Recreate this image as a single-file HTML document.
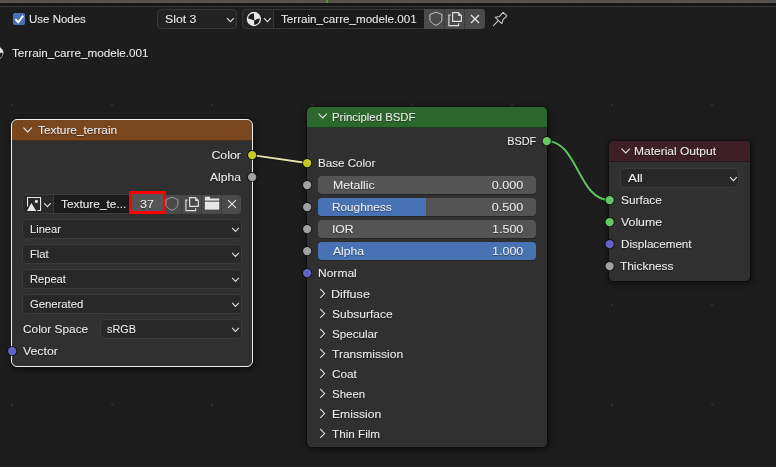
<!DOCTYPE html>
<html><head><meta charset="utf-8">
<style>
*{box-sizing:border-box;margin:0;padding:0}
html,body{width:776px;height:467px;overflow:hidden;background:#1d1d1d}
body{position:relative;font-family:"Liberation Sans",sans-serif;font-size:11.3px;color:#ececec}
.a{position:absolute}
.t{position:absolute;line-height:14px;height:14px;white-space:nowrap;transform-origin:left center;-webkit-text-stroke:0.08px #ececec;text-shadow:0 0.5px 1px rgba(0,0,0,0.45)}
.r{text-align:right}
.node{position:absolute;background:#303030;border-radius:4.5px;box-shadow:0 0 1px 1px rgba(0,0,0,0.3),1px 2px 6px 2px rgba(0,0,0,0.42)}
.hdr{position:absolute;left:0;right:0;top:0;height:21px;border-radius:5px 5px 0 0}
.sock{position:absolute;width:8.2px;height:8.2px;border-radius:50%;box-shadow:0 0 0 0.9px rgba(12,12,12,0.75);transform:translate(0.6px,0.6px)}
.dd{position:absolute;background:#282828;border:1px solid #3b3b3b;border-radius:4px;height:19px}
.sl{position:absolute;background:#545454;border-radius:4px;height:18px;overflow:hidden;box-shadow:0 1px 0.5px rgba(0,0,0,0.22)}
</style></head><body>
<!--BODY-->
<!-- grid dots -->
<svg class="a" style="left:0;top:0" width="776" height="467"><g fill="#282828"><circle cx="12.0" cy="44.8" r="0.8"/><circle cx="32.0" cy="44.8" r="0.8"/><circle cx="52.0" cy="44.8" r="0.8"/><circle cx="72.0" cy="44.8" r="0.8"/><circle cx="92.0" cy="44.8" r="0.8"/><circle cx="112.0" cy="44.8" r="0.8"/><circle cx="132.0" cy="44.8" r="0.8"/><circle cx="152.0" cy="44.8" r="0.8"/><circle cx="172.0" cy="44.8" r="0.8"/><circle cx="192.0" cy="44.8" r="0.8"/><circle cx="212.0" cy="44.8" r="0.8"/><circle cx="232.0" cy="44.8" r="0.8"/><circle cx="252.0" cy="44.8" r="0.8"/><circle cx="272.0" cy="44.8" r="0.8"/><circle cx="292.0" cy="44.8" r="0.8"/><circle cx="312.0" cy="44.8" r="0.8"/><circle cx="332.0" cy="44.8" r="0.8"/><circle cx="352.0" cy="44.8" r="0.8"/><circle cx="372.0" cy="44.8" r="0.8"/><circle cx="392.0" cy="44.8" r="0.8"/><circle cx="412.0" cy="44.8" r="0.8"/><circle cx="432.0" cy="44.8" r="0.8"/><circle cx="452.0" cy="44.8" r="0.8"/><circle cx="472.0" cy="44.8" r="0.8"/><circle cx="492.0" cy="44.8" r="0.8"/><circle cx="512.0" cy="44.8" r="0.8"/><circle cx="532.0" cy="44.8" r="0.8"/><circle cx="552.0" cy="44.8" r="0.8"/><circle cx="572.0" cy="44.8" r="0.8"/><circle cx="592.0" cy="44.8" r="0.8"/><circle cx="612.0" cy="44.8" r="0.8"/><circle cx="632.0" cy="44.8" r="0.8"/><circle cx="652.0" cy="44.8" r="0.8"/><circle cx="672.0" cy="44.8" r="0.8"/><circle cx="692.0" cy="44.8" r="0.8"/><circle cx="712.0" cy="44.8" r="0.8"/><circle cx="732.0" cy="44.8" r="0.8"/><circle cx="752.0" cy="44.8" r="0.8"/><circle cx="772.0" cy="44.8" r="0.8"/><circle cx="12.0" cy="64.8" r="0.8"/><circle cx="32.0" cy="64.8" r="0.8"/><circle cx="52.0" cy="64.8" r="0.8"/><circle cx="72.0" cy="64.8" r="0.8"/><circle cx="92.0" cy="64.8" r="0.8"/><circle cx="112.0" cy="64.8" r="0.8"/><circle cx="132.0" cy="64.8" r="0.8"/><circle cx="152.0" cy="64.8" r="0.8"/><circle cx="172.0" cy="64.8" r="0.8"/><circle cx="192.0" cy="64.8" r="0.8"/><circle cx="212.0" cy="64.8" r="0.8"/><circle cx="232.0" cy="64.8" r="0.8"/><circle cx="252.0" cy="64.8" r="0.8"/><circle cx="272.0" cy="64.8" r="0.8"/><circle cx="292.0" cy="64.8" r="0.8"/><circle cx="312.0" cy="64.8" r="0.8"/><circle cx="332.0" cy="64.8" r="0.8"/><circle cx="352.0" cy="64.8" r="0.8"/><circle cx="372.0" cy="64.8" r="0.8"/><circle cx="392.0" cy="64.8" r="0.8"/><circle cx="412.0" cy="64.8" r="0.8"/><circle cx="432.0" cy="64.8" r="0.8"/><circle cx="452.0" cy="64.8" r="0.8"/><circle cx="472.0" cy="64.8" r="0.8"/><circle cx="492.0" cy="64.8" r="0.8"/><circle cx="512.0" cy="64.8" r="0.8"/><circle cx="532.0" cy="64.8" r="0.8"/><circle cx="552.0" cy="64.8" r="0.8"/><circle cx="572.0" cy="64.8" r="0.8"/><circle cx="592.0" cy="64.8" r="0.8"/><circle cx="612.0" cy="64.8" r="0.8"/><circle cx="632.0" cy="64.8" r="0.8"/><circle cx="652.0" cy="64.8" r="0.8"/><circle cx="672.0" cy="64.8" r="0.8"/><circle cx="692.0" cy="64.8" r="0.8"/><circle cx="712.0" cy="64.8" r="0.8"/><circle cx="732.0" cy="64.8" r="0.8"/><circle cx="752.0" cy="64.8" r="0.8"/><circle cx="772.0" cy="64.8" r="0.8"/><circle cx="12.0" cy="84.8" r="0.8"/><circle cx="32.0" cy="84.8" r="0.8"/><circle cx="52.0" cy="84.8" r="0.8"/><circle cx="72.0" cy="84.8" r="0.8"/><circle cx="92.0" cy="84.8" r="0.8"/><circle cx="112.0" cy="84.8" r="0.8"/><circle cx="132.0" cy="84.8" r="0.8"/><circle cx="152.0" cy="84.8" r="0.8"/><circle cx="172.0" cy="84.8" r="0.8"/><circle cx="192.0" cy="84.8" r="0.8"/><circle cx="212.0" cy="84.8" r="0.8"/><circle cx="232.0" cy="84.8" r="0.8"/><circle cx="252.0" cy="84.8" r="0.8"/><circle cx="272.0" cy="84.8" r="0.8"/><circle cx="292.0" cy="84.8" r="0.8"/><circle cx="312.0" cy="84.8" r="0.8"/><circle cx="332.0" cy="84.8" r="0.8"/><circle cx="352.0" cy="84.8" r="0.8"/><circle cx="372.0" cy="84.8" r="0.8"/><circle cx="392.0" cy="84.8" r="0.8"/><circle cx="412.0" cy="84.8" r="0.8"/><circle cx="432.0" cy="84.8" r="0.8"/><circle cx="452.0" cy="84.8" r="0.8"/><circle cx="472.0" cy="84.8" r="0.8"/><circle cx="492.0" cy="84.8" r="0.8"/><circle cx="512.0" cy="84.8" r="0.8"/><circle cx="532.0" cy="84.8" r="0.8"/><circle cx="552.0" cy="84.8" r="0.8"/><circle cx="572.0" cy="84.8" r="0.8"/><circle cx="592.0" cy="84.8" r="0.8"/><circle cx="612.0" cy="84.8" r="0.8"/><circle cx="632.0" cy="84.8" r="0.8"/><circle cx="652.0" cy="84.8" r="0.8"/><circle cx="672.0" cy="84.8" r="0.8"/><circle cx="692.0" cy="84.8" r="0.8"/><circle cx="712.0" cy="84.8" r="0.8"/><circle cx="732.0" cy="84.8" r="0.8"/><circle cx="752.0" cy="84.8" r="0.8"/><circle cx="772.0" cy="84.8" r="0.8"/><circle cx="32.0" cy="104.8" r="0.8"/><circle cx="52.0" cy="104.8" r="0.8"/><circle cx="72.0" cy="104.8" r="0.8"/><circle cx="92.0" cy="104.8" r="0.8"/><circle cx="132.0" cy="104.8" r="0.8"/><circle cx="152.0" cy="104.8" r="0.8"/><circle cx="172.0" cy="104.8" r="0.8"/><circle cx="192.0" cy="104.8" r="0.8"/><circle cx="232.0" cy="104.8" r="0.8"/><circle cx="252.0" cy="104.8" r="0.8"/><circle cx="272.0" cy="104.8" r="0.8"/><circle cx="292.0" cy="104.8" r="0.8"/><circle cx="332.0" cy="104.8" r="0.8"/><circle cx="352.0" cy="104.8" r="0.8"/><circle cx="372.0" cy="104.8" r="0.8"/><circle cx="392.0" cy="104.8" r="0.8"/><circle cx="432.0" cy="104.8" r="0.8"/><circle cx="452.0" cy="104.8" r="0.8"/><circle cx="472.0" cy="104.8" r="0.8"/><circle cx="492.0" cy="104.8" r="0.8"/><circle cx="532.0" cy="104.8" r="0.8"/><circle cx="552.0" cy="104.8" r="0.8"/><circle cx="572.0" cy="104.8" r="0.8"/><circle cx="592.0" cy="104.8" r="0.8"/><circle cx="632.0" cy="104.8" r="0.8"/><circle cx="652.0" cy="104.8" r="0.8"/><circle cx="672.0" cy="104.8" r="0.8"/><circle cx="692.0" cy="104.8" r="0.8"/><circle cx="732.0" cy="104.8" r="0.8"/><circle cx="752.0" cy="104.8" r="0.8"/><circle cx="772.0" cy="104.8" r="0.8"/><circle cx="12.0" cy="124.8" r="0.8"/><circle cx="32.0" cy="124.8" r="0.8"/><circle cx="52.0" cy="124.8" r="0.8"/><circle cx="72.0" cy="124.8" r="0.8"/><circle cx="92.0" cy="124.8" r="0.8"/><circle cx="112.0" cy="124.8" r="0.8"/><circle cx="132.0" cy="124.8" r="0.8"/><circle cx="152.0" cy="124.8" r="0.8"/><circle cx="172.0" cy="124.8" r="0.8"/><circle cx="192.0" cy="124.8" r="0.8"/><circle cx="212.0" cy="124.8" r="0.8"/><circle cx="232.0" cy="124.8" r="0.8"/><circle cx="252.0" cy="124.8" r="0.8"/><circle cx="272.0" cy="124.8" r="0.8"/><circle cx="292.0" cy="124.8" r="0.8"/><circle cx="312.0" cy="124.8" r="0.8"/><circle cx="332.0" cy="124.8" r="0.8"/><circle cx="352.0" cy="124.8" r="0.8"/><circle cx="372.0" cy="124.8" r="0.8"/><circle cx="392.0" cy="124.8" r="0.8"/><circle cx="412.0" cy="124.8" r="0.8"/><circle cx="432.0" cy="124.8" r="0.8"/><circle cx="452.0" cy="124.8" r="0.8"/><circle cx="472.0" cy="124.8" r="0.8"/><circle cx="492.0" cy="124.8" r="0.8"/><circle cx="512.0" cy="124.8" r="0.8"/><circle cx="532.0" cy="124.8" r="0.8"/><circle cx="552.0" cy="124.8" r="0.8"/><circle cx="572.0" cy="124.8" r="0.8"/><circle cx="592.0" cy="124.8" r="0.8"/><circle cx="612.0" cy="124.8" r="0.8"/><circle cx="632.0" cy="124.8" r="0.8"/><circle cx="652.0" cy="124.8" r="0.8"/><circle cx="672.0" cy="124.8" r="0.8"/><circle cx="692.0" cy="124.8" r="0.8"/><circle cx="712.0" cy="124.8" r="0.8"/><circle cx="732.0" cy="124.8" r="0.8"/><circle cx="752.0" cy="124.8" r="0.8"/><circle cx="772.0" cy="124.8" r="0.8"/><circle cx="12.0" cy="144.8" r="0.8"/><circle cx="32.0" cy="144.8" r="0.8"/><circle cx="52.0" cy="144.8" r="0.8"/><circle cx="72.0" cy="144.8" r="0.8"/><circle cx="92.0" cy="144.8" r="0.8"/><circle cx="112.0" cy="144.8" r="0.8"/><circle cx="132.0" cy="144.8" r="0.8"/><circle cx="152.0" cy="144.8" r="0.8"/><circle cx="172.0" cy="144.8" r="0.8"/><circle cx="192.0" cy="144.8" r="0.8"/><circle cx="212.0" cy="144.8" r="0.8"/><circle cx="232.0" cy="144.8" r="0.8"/><circle cx="252.0" cy="144.8" r="0.8"/><circle cx="272.0" cy="144.8" r="0.8"/><circle cx="292.0" cy="144.8" r="0.8"/><circle cx="312.0" cy="144.8" r="0.8"/><circle cx="332.0" cy="144.8" r="0.8"/><circle cx="352.0" cy="144.8" r="0.8"/><circle cx="372.0" cy="144.8" r="0.8"/><circle cx="392.0" cy="144.8" r="0.8"/><circle cx="412.0" cy="144.8" r="0.8"/><circle cx="432.0" cy="144.8" r="0.8"/><circle cx="452.0" cy="144.8" r="0.8"/><circle cx="472.0" cy="144.8" r="0.8"/><circle cx="492.0" cy="144.8" r="0.8"/><circle cx="512.0" cy="144.8" r="0.8"/><circle cx="532.0" cy="144.8" r="0.8"/><circle cx="552.0" cy="144.8" r="0.8"/><circle cx="572.0" cy="144.8" r="0.8"/><circle cx="592.0" cy="144.8" r="0.8"/><circle cx="612.0" cy="144.8" r="0.8"/><circle cx="632.0" cy="144.8" r="0.8"/><circle cx="652.0" cy="144.8" r="0.8"/><circle cx="672.0" cy="144.8" r="0.8"/><circle cx="692.0" cy="144.8" r="0.8"/><circle cx="712.0" cy="144.8" r="0.8"/><circle cx="732.0" cy="144.8" r="0.8"/><circle cx="752.0" cy="144.8" r="0.8"/><circle cx="772.0" cy="144.8" r="0.8"/><circle cx="12.0" cy="164.8" r="0.8"/><circle cx="32.0" cy="164.8" r="0.8"/><circle cx="52.0" cy="164.8" r="0.8"/><circle cx="72.0" cy="164.8" r="0.8"/><circle cx="92.0" cy="164.8" r="0.8"/><circle cx="112.0" cy="164.8" r="0.8"/><circle cx="132.0" cy="164.8" r="0.8"/><circle cx="152.0" cy="164.8" r="0.8"/><circle cx="172.0" cy="164.8" r="0.8"/><circle cx="192.0" cy="164.8" r="0.8"/><circle cx="212.0" cy="164.8" r="0.8"/><circle cx="232.0" cy="164.8" r="0.8"/><circle cx="252.0" cy="164.8" r="0.8"/><circle cx="272.0" cy="164.8" r="0.8"/><circle cx="292.0" cy="164.8" r="0.8"/><circle cx="312.0" cy="164.8" r="0.8"/><circle cx="332.0" cy="164.8" r="0.8"/><circle cx="352.0" cy="164.8" r="0.8"/><circle cx="372.0" cy="164.8" r="0.8"/><circle cx="392.0" cy="164.8" r="0.8"/><circle cx="412.0" cy="164.8" r="0.8"/><circle cx="432.0" cy="164.8" r="0.8"/><circle cx="452.0" cy="164.8" r="0.8"/><circle cx="472.0" cy="164.8" r="0.8"/><circle cx="492.0" cy="164.8" r="0.8"/><circle cx="512.0" cy="164.8" r="0.8"/><circle cx="532.0" cy="164.8" r="0.8"/><circle cx="552.0" cy="164.8" r="0.8"/><circle cx="572.0" cy="164.8" r="0.8"/><circle cx="592.0" cy="164.8" r="0.8"/><circle cx="612.0" cy="164.8" r="0.8"/><circle cx="632.0" cy="164.8" r="0.8"/><circle cx="652.0" cy="164.8" r="0.8"/><circle cx="672.0" cy="164.8" r="0.8"/><circle cx="692.0" cy="164.8" r="0.8"/><circle cx="712.0" cy="164.8" r="0.8"/><circle cx="732.0" cy="164.8" r="0.8"/><circle cx="752.0" cy="164.8" r="0.8"/><circle cx="772.0" cy="164.8" r="0.8"/><circle cx="12.0" cy="184.8" r="0.8"/><circle cx="32.0" cy="184.8" r="0.8"/><circle cx="52.0" cy="184.8" r="0.8"/><circle cx="72.0" cy="184.8" r="0.8"/><circle cx="92.0" cy="184.8" r="0.8"/><circle cx="112.0" cy="184.8" r="0.8"/><circle cx="132.0" cy="184.8" r="0.8"/><circle cx="152.0" cy="184.8" r="0.8"/><circle cx="172.0" cy="184.8" r="0.8"/><circle cx="192.0" cy="184.8" r="0.8"/><circle cx="212.0" cy="184.8" r="0.8"/><circle cx="232.0" cy="184.8" r="0.8"/><circle cx="252.0" cy="184.8" r="0.8"/><circle cx="272.0" cy="184.8" r="0.8"/><circle cx="292.0" cy="184.8" r="0.8"/><circle cx="312.0" cy="184.8" r="0.8"/><circle cx="332.0" cy="184.8" r="0.8"/><circle cx="352.0" cy="184.8" r="0.8"/><circle cx="372.0" cy="184.8" r="0.8"/><circle cx="392.0" cy="184.8" r="0.8"/><circle cx="412.0" cy="184.8" r="0.8"/><circle cx="432.0" cy="184.8" r="0.8"/><circle cx="452.0" cy="184.8" r="0.8"/><circle cx="472.0" cy="184.8" r="0.8"/><circle cx="492.0" cy="184.8" r="0.8"/><circle cx="512.0" cy="184.8" r="0.8"/><circle cx="532.0" cy="184.8" r="0.8"/><circle cx="552.0" cy="184.8" r="0.8"/><circle cx="572.0" cy="184.8" r="0.8"/><circle cx="592.0" cy="184.8" r="0.8"/><circle cx="612.0" cy="184.8" r="0.8"/><circle cx="632.0" cy="184.8" r="0.8"/><circle cx="652.0" cy="184.8" r="0.8"/><circle cx="672.0" cy="184.8" r="0.8"/><circle cx="692.0" cy="184.8" r="0.8"/><circle cx="712.0" cy="184.8" r="0.8"/><circle cx="732.0" cy="184.8" r="0.8"/><circle cx="752.0" cy="184.8" r="0.8"/><circle cx="772.0" cy="184.8" r="0.8"/><circle cx="32.0" cy="204.8" r="0.8"/><circle cx="52.0" cy="204.8" r="0.8"/><circle cx="72.0" cy="204.8" r="0.8"/><circle cx="92.0" cy="204.8" r="0.8"/><circle cx="132.0" cy="204.8" r="0.8"/><circle cx="152.0" cy="204.8" r="0.8"/><circle cx="172.0" cy="204.8" r="0.8"/><circle cx="192.0" cy="204.8" r="0.8"/><circle cx="232.0" cy="204.8" r="0.8"/><circle cx="252.0" cy="204.8" r="0.8"/><circle cx="272.0" cy="204.8" r="0.8"/><circle cx="292.0" cy="204.8" r="0.8"/><circle cx="332.0" cy="204.8" r="0.8"/><circle cx="352.0" cy="204.8" r="0.8"/><circle cx="372.0" cy="204.8" r="0.8"/><circle cx="392.0" cy="204.8" r="0.8"/><circle cx="432.0" cy="204.8" r="0.8"/><circle cx="452.0" cy="204.8" r="0.8"/><circle cx="472.0" cy="204.8" r="0.8"/><circle cx="492.0" cy="204.8" r="0.8"/><circle cx="532.0" cy="204.8" r="0.8"/><circle cx="552.0" cy="204.8" r="0.8"/><circle cx="572.0" cy="204.8" r="0.8"/><circle cx="592.0" cy="204.8" r="0.8"/><circle cx="632.0" cy="204.8" r="0.8"/><circle cx="652.0" cy="204.8" r="0.8"/><circle cx="672.0" cy="204.8" r="0.8"/><circle cx="692.0" cy="204.8" r="0.8"/><circle cx="732.0" cy="204.8" r="0.8"/><circle cx="752.0" cy="204.8" r="0.8"/><circle cx="772.0" cy="204.8" r="0.8"/><circle cx="12.0" cy="224.8" r="0.8"/><circle cx="32.0" cy="224.8" r="0.8"/><circle cx="52.0" cy="224.8" r="0.8"/><circle cx="72.0" cy="224.8" r="0.8"/><circle cx="92.0" cy="224.8" r="0.8"/><circle cx="112.0" cy="224.8" r="0.8"/><circle cx="132.0" cy="224.8" r="0.8"/><circle cx="152.0" cy="224.8" r="0.8"/><circle cx="172.0" cy="224.8" r="0.8"/><circle cx="192.0" cy="224.8" r="0.8"/><circle cx="212.0" cy="224.8" r="0.8"/><circle cx="232.0" cy="224.8" r="0.8"/><circle cx="252.0" cy="224.8" r="0.8"/><circle cx="272.0" cy="224.8" r="0.8"/><circle cx="292.0" cy="224.8" r="0.8"/><circle cx="312.0" cy="224.8" r="0.8"/><circle cx="332.0" cy="224.8" r="0.8"/><circle cx="352.0" cy="224.8" r="0.8"/><circle cx="372.0" cy="224.8" r="0.8"/><circle cx="392.0" cy="224.8" r="0.8"/><circle cx="412.0" cy="224.8" r="0.8"/><circle cx="432.0" cy="224.8" r="0.8"/><circle cx="452.0" cy="224.8" r="0.8"/><circle cx="472.0" cy="224.8" r="0.8"/><circle cx="492.0" cy="224.8" r="0.8"/><circle cx="512.0" cy="224.8" r="0.8"/><circle cx="532.0" cy="224.8" r="0.8"/><circle cx="552.0" cy="224.8" r="0.8"/><circle cx="572.0" cy="224.8" r="0.8"/><circle cx="592.0" cy="224.8" r="0.8"/><circle cx="612.0" cy="224.8" r="0.8"/><circle cx="632.0" cy="224.8" r="0.8"/><circle cx="652.0" cy="224.8" r="0.8"/><circle cx="672.0" cy="224.8" r="0.8"/><circle cx="692.0" cy="224.8" r="0.8"/><circle cx="712.0" cy="224.8" r="0.8"/><circle cx="732.0" cy="224.8" r="0.8"/><circle cx="752.0" cy="224.8" r="0.8"/><circle cx="772.0" cy="224.8" r="0.8"/><circle cx="12.0" cy="244.8" r="0.8"/><circle cx="32.0" cy="244.8" r="0.8"/><circle cx="52.0" cy="244.8" r="0.8"/><circle cx="72.0" cy="244.8" r="0.8"/><circle cx="92.0" cy="244.8" r="0.8"/><circle cx="112.0" cy="244.8" r="0.8"/><circle cx="132.0" cy="244.8" r="0.8"/><circle cx="152.0" cy="244.8" r="0.8"/><circle cx="172.0" cy="244.8" r="0.8"/><circle cx="192.0" cy="244.8" r="0.8"/><circle cx="212.0" cy="244.8" r="0.8"/><circle cx="232.0" cy="244.8" r="0.8"/><circle cx="252.0" cy="244.8" r="0.8"/><circle cx="272.0" cy="244.8" r="0.8"/><circle cx="292.0" cy="244.8" r="0.8"/><circle cx="312.0" cy="244.8" r="0.8"/><circle cx="332.0" cy="244.8" r="0.8"/><circle cx="352.0" cy="244.8" r="0.8"/><circle cx="372.0" cy="244.8" r="0.8"/><circle cx="392.0" cy="244.8" r="0.8"/><circle cx="412.0" cy="244.8" r="0.8"/><circle cx="432.0" cy="244.8" r="0.8"/><circle cx="452.0" cy="244.8" r="0.8"/><circle cx="472.0" cy="244.8" r="0.8"/><circle cx="492.0" cy="244.8" r="0.8"/><circle cx="512.0" cy="244.8" r="0.8"/><circle cx="532.0" cy="244.8" r="0.8"/><circle cx="552.0" cy="244.8" r="0.8"/><circle cx="572.0" cy="244.8" r="0.8"/><circle cx="592.0" cy="244.8" r="0.8"/><circle cx="612.0" cy="244.8" r="0.8"/><circle cx="632.0" cy="244.8" r="0.8"/><circle cx="652.0" cy="244.8" r="0.8"/><circle cx="672.0" cy="244.8" r="0.8"/><circle cx="692.0" cy="244.8" r="0.8"/><circle cx="712.0" cy="244.8" r="0.8"/><circle cx="732.0" cy="244.8" r="0.8"/><circle cx="752.0" cy="244.8" r="0.8"/><circle cx="772.0" cy="244.8" r="0.8"/><circle cx="12.0" cy="264.8" r="0.8"/><circle cx="32.0" cy="264.8" r="0.8"/><circle cx="52.0" cy="264.8" r="0.8"/><circle cx="72.0" cy="264.8" r="0.8"/><circle cx="92.0" cy="264.8" r="0.8"/><circle cx="112.0" cy="264.8" r="0.8"/><circle cx="132.0" cy="264.8" r="0.8"/><circle cx="152.0" cy="264.8" r="0.8"/><circle cx="172.0" cy="264.8" r="0.8"/><circle cx="192.0" cy="264.8" r="0.8"/><circle cx="212.0" cy="264.8" r="0.8"/><circle cx="232.0" cy="264.8" r="0.8"/><circle cx="252.0" cy="264.8" r="0.8"/><circle cx="272.0" cy="264.8" r="0.8"/><circle cx="292.0" cy="264.8" r="0.8"/><circle cx="312.0" cy="264.8" r="0.8"/><circle cx="332.0" cy="264.8" r="0.8"/><circle cx="352.0" cy="264.8" r="0.8"/><circle cx="372.0" cy="264.8" r="0.8"/><circle cx="392.0" cy="264.8" r="0.8"/><circle cx="412.0" cy="264.8" r="0.8"/><circle cx="432.0" cy="264.8" r="0.8"/><circle cx="452.0" cy="264.8" r="0.8"/><circle cx="472.0" cy="264.8" r="0.8"/><circle cx="492.0" cy="264.8" r="0.8"/><circle cx="512.0" cy="264.8" r="0.8"/><circle cx="532.0" cy="264.8" r="0.8"/><circle cx="552.0" cy="264.8" r="0.8"/><circle cx="572.0" cy="264.8" r="0.8"/><circle cx="592.0" cy="264.8" r="0.8"/><circle cx="612.0" cy="264.8" r="0.8"/><circle cx="632.0" cy="264.8" r="0.8"/><circle cx="652.0" cy="264.8" r="0.8"/><circle cx="672.0" cy="264.8" r="0.8"/><circle cx="692.0" cy="264.8" r="0.8"/><circle cx="712.0" cy="264.8" r="0.8"/><circle cx="732.0" cy="264.8" r="0.8"/><circle cx="752.0" cy="264.8" r="0.8"/><circle cx="772.0" cy="264.8" r="0.8"/><circle cx="12.0" cy="284.8" r="0.8"/><circle cx="32.0" cy="284.8" r="0.8"/><circle cx="52.0" cy="284.8" r="0.8"/><circle cx="72.0" cy="284.8" r="0.8"/><circle cx="92.0" cy="284.8" r="0.8"/><circle cx="112.0" cy="284.8" r="0.8"/><circle cx="132.0" cy="284.8" r="0.8"/><circle cx="152.0" cy="284.8" r="0.8"/><circle cx="172.0" cy="284.8" r="0.8"/><circle cx="192.0" cy="284.8" r="0.8"/><circle cx="212.0" cy="284.8" r="0.8"/><circle cx="232.0" cy="284.8" r="0.8"/><circle cx="252.0" cy="284.8" r="0.8"/><circle cx="272.0" cy="284.8" r="0.8"/><circle cx="292.0" cy="284.8" r="0.8"/><circle cx="312.0" cy="284.8" r="0.8"/><circle cx="332.0" cy="284.8" r="0.8"/><circle cx="352.0" cy="284.8" r="0.8"/><circle cx="372.0" cy="284.8" r="0.8"/><circle cx="392.0" cy="284.8" r="0.8"/><circle cx="412.0" cy="284.8" r="0.8"/><circle cx="432.0" cy="284.8" r="0.8"/><circle cx="452.0" cy="284.8" r="0.8"/><circle cx="472.0" cy="284.8" r="0.8"/><circle cx="492.0" cy="284.8" r="0.8"/><circle cx="512.0" cy="284.8" r="0.8"/><circle cx="532.0" cy="284.8" r="0.8"/><circle cx="552.0" cy="284.8" r="0.8"/><circle cx="572.0" cy="284.8" r="0.8"/><circle cx="592.0" cy="284.8" r="0.8"/><circle cx="612.0" cy="284.8" r="0.8"/><circle cx="632.0" cy="284.8" r="0.8"/><circle cx="652.0" cy="284.8" r="0.8"/><circle cx="672.0" cy="284.8" r="0.8"/><circle cx="692.0" cy="284.8" r="0.8"/><circle cx="712.0" cy="284.8" r="0.8"/><circle cx="732.0" cy="284.8" r="0.8"/><circle cx="752.0" cy="284.8" r="0.8"/><circle cx="772.0" cy="284.8" r="0.8"/><circle cx="32.0" cy="304.8" r="0.8"/><circle cx="52.0" cy="304.8" r="0.8"/><circle cx="72.0" cy="304.8" r="0.8"/><circle cx="92.0" cy="304.8" r="0.8"/><circle cx="132.0" cy="304.8" r="0.8"/><circle cx="152.0" cy="304.8" r="0.8"/><circle cx="172.0" cy="304.8" r="0.8"/><circle cx="192.0" cy="304.8" r="0.8"/><circle cx="232.0" cy="304.8" r="0.8"/><circle cx="252.0" cy="304.8" r="0.8"/><circle cx="272.0" cy="304.8" r="0.8"/><circle cx="292.0" cy="304.8" r="0.8"/><circle cx="332.0" cy="304.8" r="0.8"/><circle cx="352.0" cy="304.8" r="0.8"/><circle cx="372.0" cy="304.8" r="0.8"/><circle cx="392.0" cy="304.8" r="0.8"/><circle cx="432.0" cy="304.8" r="0.8"/><circle cx="452.0" cy="304.8" r="0.8"/><circle cx="472.0" cy="304.8" r="0.8"/><circle cx="492.0" cy="304.8" r="0.8"/><circle cx="532.0" cy="304.8" r="0.8"/><circle cx="552.0" cy="304.8" r="0.8"/><circle cx="572.0" cy="304.8" r="0.8"/><circle cx="592.0" cy="304.8" r="0.8"/><circle cx="632.0" cy="304.8" r="0.8"/><circle cx="652.0" cy="304.8" r="0.8"/><circle cx="672.0" cy="304.8" r="0.8"/><circle cx="692.0" cy="304.8" r="0.8"/><circle cx="732.0" cy="304.8" r="0.8"/><circle cx="752.0" cy="304.8" r="0.8"/><circle cx="772.0" cy="304.8" r="0.8"/><circle cx="12.0" cy="324.8" r="0.8"/><circle cx="32.0" cy="324.8" r="0.8"/><circle cx="52.0" cy="324.8" r="0.8"/><circle cx="72.0" cy="324.8" r="0.8"/><circle cx="92.0" cy="324.8" r="0.8"/><circle cx="112.0" cy="324.8" r="0.8"/><circle cx="132.0" cy="324.8" r="0.8"/><circle cx="152.0" cy="324.8" r="0.8"/><circle cx="172.0" cy="324.8" r="0.8"/><circle cx="192.0" cy="324.8" r="0.8"/><circle cx="212.0" cy="324.8" r="0.8"/><circle cx="232.0" cy="324.8" r="0.8"/><circle cx="252.0" cy="324.8" r="0.8"/><circle cx="272.0" cy="324.8" r="0.8"/><circle cx="292.0" cy="324.8" r="0.8"/><circle cx="312.0" cy="324.8" r="0.8"/><circle cx="332.0" cy="324.8" r="0.8"/><circle cx="352.0" cy="324.8" r="0.8"/><circle cx="372.0" cy="324.8" r="0.8"/><circle cx="392.0" cy="324.8" r="0.8"/><circle cx="412.0" cy="324.8" r="0.8"/><circle cx="432.0" cy="324.8" r="0.8"/><circle cx="452.0" cy="324.8" r="0.8"/><circle cx="472.0" cy="324.8" r="0.8"/><circle cx="492.0" cy="324.8" r="0.8"/><circle cx="512.0" cy="324.8" r="0.8"/><circle cx="532.0" cy="324.8" r="0.8"/><circle cx="552.0" cy="324.8" r="0.8"/><circle cx="572.0" cy="324.8" r="0.8"/><circle cx="592.0" cy="324.8" r="0.8"/><circle cx="612.0" cy="324.8" r="0.8"/><circle cx="632.0" cy="324.8" r="0.8"/><circle cx="652.0" cy="324.8" r="0.8"/><circle cx="672.0" cy="324.8" r="0.8"/><circle cx="692.0" cy="324.8" r="0.8"/><circle cx="712.0" cy="324.8" r="0.8"/><circle cx="732.0" cy="324.8" r="0.8"/><circle cx="752.0" cy="324.8" r="0.8"/><circle cx="772.0" cy="324.8" r="0.8"/><circle cx="12.0" cy="344.8" r="0.8"/><circle cx="32.0" cy="344.8" r="0.8"/><circle cx="52.0" cy="344.8" r="0.8"/><circle cx="72.0" cy="344.8" r="0.8"/><circle cx="92.0" cy="344.8" r="0.8"/><circle cx="112.0" cy="344.8" r="0.8"/><circle cx="132.0" cy="344.8" r="0.8"/><circle cx="152.0" cy="344.8" r="0.8"/><circle cx="172.0" cy="344.8" r="0.8"/><circle cx="192.0" cy="344.8" r="0.8"/><circle cx="212.0" cy="344.8" r="0.8"/><circle cx="232.0" cy="344.8" r="0.8"/><circle cx="252.0" cy="344.8" r="0.8"/><circle cx="272.0" cy="344.8" r="0.8"/><circle cx="292.0" cy="344.8" r="0.8"/><circle cx="312.0" cy="344.8" r="0.8"/><circle cx="332.0" cy="344.8" r="0.8"/><circle cx="352.0" cy="344.8" r="0.8"/><circle cx="372.0" cy="344.8" r="0.8"/><circle cx="392.0" cy="344.8" r="0.8"/><circle cx="412.0" cy="344.8" r="0.8"/><circle cx="432.0" cy="344.8" r="0.8"/><circle cx="452.0" cy="344.8" r="0.8"/><circle cx="472.0" cy="344.8" r="0.8"/><circle cx="492.0" cy="344.8" r="0.8"/><circle cx="512.0" cy="344.8" r="0.8"/><circle cx="532.0" cy="344.8" r="0.8"/><circle cx="552.0" cy="344.8" r="0.8"/><circle cx="572.0" cy="344.8" r="0.8"/><circle cx="592.0" cy="344.8" r="0.8"/><circle cx="612.0" cy="344.8" r="0.8"/><circle cx="632.0" cy="344.8" r="0.8"/><circle cx="652.0" cy="344.8" r="0.8"/><circle cx="672.0" cy="344.8" r="0.8"/><circle cx="692.0" cy="344.8" r="0.8"/><circle cx="712.0" cy="344.8" r="0.8"/><circle cx="732.0" cy="344.8" r="0.8"/><circle cx="752.0" cy="344.8" r="0.8"/><circle cx="772.0" cy="344.8" r="0.8"/><circle cx="12.0" cy="364.8" r="0.8"/><circle cx="32.0" cy="364.8" r="0.8"/><circle cx="52.0" cy="364.8" r="0.8"/><circle cx="72.0" cy="364.8" r="0.8"/><circle cx="92.0" cy="364.8" r="0.8"/><circle cx="112.0" cy="364.8" r="0.8"/><circle cx="132.0" cy="364.8" r="0.8"/><circle cx="152.0" cy="364.8" r="0.8"/><circle cx="172.0" cy="364.8" r="0.8"/><circle cx="192.0" cy="364.8" r="0.8"/><circle cx="212.0" cy="364.8" r="0.8"/><circle cx="232.0" cy="364.8" r="0.8"/><circle cx="252.0" cy="364.8" r="0.8"/><circle cx="272.0" cy="364.8" r="0.8"/><circle cx="292.0" cy="364.8" r="0.8"/><circle cx="312.0" cy="364.8" r="0.8"/><circle cx="332.0" cy="364.8" r="0.8"/><circle cx="352.0" cy="364.8" r="0.8"/><circle cx="372.0" cy="364.8" r="0.8"/><circle cx="392.0" cy="364.8" r="0.8"/><circle cx="412.0" cy="364.8" r="0.8"/><circle cx="432.0" cy="364.8" r="0.8"/><circle cx="452.0" cy="364.8" r="0.8"/><circle cx="472.0" cy="364.8" r="0.8"/><circle cx="492.0" cy="364.8" r="0.8"/><circle cx="512.0" cy="364.8" r="0.8"/><circle cx="532.0" cy="364.8" r="0.8"/><circle cx="552.0" cy="364.8" r="0.8"/><circle cx="572.0" cy="364.8" r="0.8"/><circle cx="592.0" cy="364.8" r="0.8"/><circle cx="612.0" cy="364.8" r="0.8"/><circle cx="632.0" cy="364.8" r="0.8"/><circle cx="652.0" cy="364.8" r="0.8"/><circle cx="672.0" cy="364.8" r="0.8"/><circle cx="692.0" cy="364.8" r="0.8"/><circle cx="712.0" cy="364.8" r="0.8"/><circle cx="732.0" cy="364.8" r="0.8"/><circle cx="752.0" cy="364.8" r="0.8"/><circle cx="772.0" cy="364.8" r="0.8"/><circle cx="12.0" cy="384.8" r="0.8"/><circle cx="32.0" cy="384.8" r="0.8"/><circle cx="52.0" cy="384.8" r="0.8"/><circle cx="72.0" cy="384.8" r="0.8"/><circle cx="92.0" cy="384.8" r="0.8"/><circle cx="112.0" cy="384.8" r="0.8"/><circle cx="132.0" cy="384.8" r="0.8"/><circle cx="152.0" cy="384.8" r="0.8"/><circle cx="172.0" cy="384.8" r="0.8"/><circle cx="192.0" cy="384.8" r="0.8"/><circle cx="212.0" cy="384.8" r="0.8"/><circle cx="232.0" cy="384.8" r="0.8"/><circle cx="252.0" cy="384.8" r="0.8"/><circle cx="272.0" cy="384.8" r="0.8"/><circle cx="292.0" cy="384.8" r="0.8"/><circle cx="312.0" cy="384.8" r="0.8"/><circle cx="332.0" cy="384.8" r="0.8"/><circle cx="352.0" cy="384.8" r="0.8"/><circle cx="372.0" cy="384.8" r="0.8"/><circle cx="392.0" cy="384.8" r="0.8"/><circle cx="412.0" cy="384.8" r="0.8"/><circle cx="432.0" cy="384.8" r="0.8"/><circle cx="452.0" cy="384.8" r="0.8"/><circle cx="472.0" cy="384.8" r="0.8"/><circle cx="492.0" cy="384.8" r="0.8"/><circle cx="512.0" cy="384.8" r="0.8"/><circle cx="532.0" cy="384.8" r="0.8"/><circle cx="552.0" cy="384.8" r="0.8"/><circle cx="572.0" cy="384.8" r="0.8"/><circle cx="592.0" cy="384.8" r="0.8"/><circle cx="612.0" cy="384.8" r="0.8"/><circle cx="632.0" cy="384.8" r="0.8"/><circle cx="652.0" cy="384.8" r="0.8"/><circle cx="672.0" cy="384.8" r="0.8"/><circle cx="692.0" cy="384.8" r="0.8"/><circle cx="712.0" cy="384.8" r="0.8"/><circle cx="732.0" cy="384.8" r="0.8"/><circle cx="752.0" cy="384.8" r="0.8"/><circle cx="772.0" cy="384.8" r="0.8"/><circle cx="32.0" cy="404.8" r="0.8"/><circle cx="52.0" cy="404.8" r="0.8"/><circle cx="72.0" cy="404.8" r="0.8"/><circle cx="92.0" cy="404.8" r="0.8"/><circle cx="132.0" cy="404.8" r="0.8"/><circle cx="152.0" cy="404.8" r="0.8"/><circle cx="172.0" cy="404.8" r="0.8"/><circle cx="192.0" cy="404.8" r="0.8"/><circle cx="232.0" cy="404.8" r="0.8"/><circle cx="252.0" cy="404.8" r="0.8"/><circle cx="272.0" cy="404.8" r="0.8"/><circle cx="292.0" cy="404.8" r="0.8"/><circle cx="332.0" cy="404.8" r="0.8"/><circle cx="352.0" cy="404.8" r="0.8"/><circle cx="372.0" cy="404.8" r="0.8"/><circle cx="392.0" cy="404.8" r="0.8"/><circle cx="432.0" cy="404.8" r="0.8"/><circle cx="452.0" cy="404.8" r="0.8"/><circle cx="472.0" cy="404.8" r="0.8"/><circle cx="492.0" cy="404.8" r="0.8"/><circle cx="532.0" cy="404.8" r="0.8"/><circle cx="552.0" cy="404.8" r="0.8"/><circle cx="572.0" cy="404.8" r="0.8"/><circle cx="592.0" cy="404.8" r="0.8"/><circle cx="632.0" cy="404.8" r="0.8"/><circle cx="652.0" cy="404.8" r="0.8"/><circle cx="672.0" cy="404.8" r="0.8"/><circle cx="692.0" cy="404.8" r="0.8"/><circle cx="732.0" cy="404.8" r="0.8"/><circle cx="752.0" cy="404.8" r="0.8"/><circle cx="772.0" cy="404.8" r="0.8"/><circle cx="12.0" cy="424.8" r="0.8"/><circle cx="32.0" cy="424.8" r="0.8"/><circle cx="52.0" cy="424.8" r="0.8"/><circle cx="72.0" cy="424.8" r="0.8"/><circle cx="92.0" cy="424.8" r="0.8"/><circle cx="112.0" cy="424.8" r="0.8"/><circle cx="132.0" cy="424.8" r="0.8"/><circle cx="152.0" cy="424.8" r="0.8"/><circle cx="172.0" cy="424.8" r="0.8"/><circle cx="192.0" cy="424.8" r="0.8"/><circle cx="212.0" cy="424.8" r="0.8"/><circle cx="232.0" cy="424.8" r="0.8"/><circle cx="252.0" cy="424.8" r="0.8"/><circle cx="272.0" cy="424.8" r="0.8"/><circle cx="292.0" cy="424.8" r="0.8"/><circle cx="312.0" cy="424.8" r="0.8"/><circle cx="332.0" cy="424.8" r="0.8"/><circle cx="352.0" cy="424.8" r="0.8"/><circle cx="372.0" cy="424.8" r="0.8"/><circle cx="392.0" cy="424.8" r="0.8"/><circle cx="412.0" cy="424.8" r="0.8"/><circle cx="432.0" cy="424.8" r="0.8"/><circle cx="452.0" cy="424.8" r="0.8"/><circle cx="472.0" cy="424.8" r="0.8"/><circle cx="492.0" cy="424.8" r="0.8"/><circle cx="512.0" cy="424.8" r="0.8"/><circle cx="532.0" cy="424.8" r="0.8"/><circle cx="552.0" cy="424.8" r="0.8"/><circle cx="572.0" cy="424.8" r="0.8"/><circle cx="592.0" cy="424.8" r="0.8"/><circle cx="612.0" cy="424.8" r="0.8"/><circle cx="632.0" cy="424.8" r="0.8"/><circle cx="652.0" cy="424.8" r="0.8"/><circle cx="672.0" cy="424.8" r="0.8"/><circle cx="692.0" cy="424.8" r="0.8"/><circle cx="712.0" cy="424.8" r="0.8"/><circle cx="732.0" cy="424.8" r="0.8"/><circle cx="752.0" cy="424.8" r="0.8"/><circle cx="772.0" cy="424.8" r="0.8"/><circle cx="12.0" cy="444.8" r="0.8"/><circle cx="32.0" cy="444.8" r="0.8"/><circle cx="52.0" cy="444.8" r="0.8"/><circle cx="72.0" cy="444.8" r="0.8"/><circle cx="92.0" cy="444.8" r="0.8"/><circle cx="112.0" cy="444.8" r="0.8"/><circle cx="132.0" cy="444.8" r="0.8"/><circle cx="152.0" cy="444.8" r="0.8"/><circle cx="172.0" cy="444.8" r="0.8"/><circle cx="192.0" cy="444.8" r="0.8"/><circle cx="212.0" cy="444.8" r="0.8"/><circle cx="232.0" cy="444.8" r="0.8"/><circle cx="252.0" cy="444.8" r="0.8"/><circle cx="272.0" cy="444.8" r="0.8"/><circle cx="292.0" cy="444.8" r="0.8"/><circle cx="312.0" cy="444.8" r="0.8"/><circle cx="332.0" cy="444.8" r="0.8"/><circle cx="352.0" cy="444.8" r="0.8"/><circle cx="372.0" cy="444.8" r="0.8"/><circle cx="392.0" cy="444.8" r="0.8"/><circle cx="412.0" cy="444.8" r="0.8"/><circle cx="432.0" cy="444.8" r="0.8"/><circle cx="452.0" cy="444.8" r="0.8"/><circle cx="472.0" cy="444.8" r="0.8"/><circle cx="492.0" cy="444.8" r="0.8"/><circle cx="512.0" cy="444.8" r="0.8"/><circle cx="532.0" cy="444.8" r="0.8"/><circle cx="552.0" cy="444.8" r="0.8"/><circle cx="572.0" cy="444.8" r="0.8"/><circle cx="592.0" cy="444.8" r="0.8"/><circle cx="612.0" cy="444.8" r="0.8"/><circle cx="632.0" cy="444.8" r="0.8"/><circle cx="652.0" cy="444.8" r="0.8"/><circle cx="672.0" cy="444.8" r="0.8"/><circle cx="692.0" cy="444.8" r="0.8"/><circle cx="712.0" cy="444.8" r="0.8"/><circle cx="732.0" cy="444.8" r="0.8"/><circle cx="752.0" cy="444.8" r="0.8"/><circle cx="772.0" cy="444.8" r="0.8"/><circle cx="12.0" cy="464.8" r="0.8"/><circle cx="32.0" cy="464.8" r="0.8"/><circle cx="52.0" cy="464.8" r="0.8"/><circle cx="72.0" cy="464.8" r="0.8"/><circle cx="92.0" cy="464.8" r="0.8"/><circle cx="112.0" cy="464.8" r="0.8"/><circle cx="132.0" cy="464.8" r="0.8"/><circle cx="152.0" cy="464.8" r="0.8"/><circle cx="172.0" cy="464.8" r="0.8"/><circle cx="192.0" cy="464.8" r="0.8"/><circle cx="212.0" cy="464.8" r="0.8"/><circle cx="232.0" cy="464.8" r="0.8"/><circle cx="252.0" cy="464.8" r="0.8"/><circle cx="272.0" cy="464.8" r="0.8"/><circle cx="292.0" cy="464.8" r="0.8"/><circle cx="312.0" cy="464.8" r="0.8"/><circle cx="332.0" cy="464.8" r="0.8"/><circle cx="352.0" cy="464.8" r="0.8"/><circle cx="372.0" cy="464.8" r="0.8"/><circle cx="392.0" cy="464.8" r="0.8"/><circle cx="412.0" cy="464.8" r="0.8"/><circle cx="432.0" cy="464.8" r="0.8"/><circle cx="452.0" cy="464.8" r="0.8"/><circle cx="472.0" cy="464.8" r="0.8"/><circle cx="492.0" cy="464.8" r="0.8"/><circle cx="512.0" cy="464.8" r="0.8"/><circle cx="532.0" cy="464.8" r="0.8"/><circle cx="552.0" cy="464.8" r="0.8"/><circle cx="572.0" cy="464.8" r="0.8"/><circle cx="592.0" cy="464.8" r="0.8"/><circle cx="612.0" cy="464.8" r="0.8"/><circle cx="632.0" cy="464.8" r="0.8"/><circle cx="652.0" cy="464.8" r="0.8"/><circle cx="672.0" cy="464.8" r="0.8"/><circle cx="692.0" cy="464.8" r="0.8"/><circle cx="712.0" cy="464.8" r="0.8"/><circle cx="732.0" cy="464.8" r="0.8"/><circle cx="752.0" cy="464.8" r="0.8"/><circle cx="772.0" cy="464.8" r="0.8"/></g><g fill="#303030"><circle cx="12.1" cy="104.7" r="1.2"/><circle cx="112.1" cy="104.7" r="1.2"/><circle cx="212.1" cy="104.7" r="1.2"/><circle cx="312.1" cy="104.7" r="1.2"/><circle cx="412.1" cy="104.7" r="1.2"/><circle cx="512.1" cy="104.7" r="1.2"/><circle cx="612.1" cy="104.7" r="1.2"/><circle cx="712.1" cy="104.7" r="1.2"/><circle cx="12.1" cy="204.7" r="1.2"/><circle cx="112.1" cy="204.7" r="1.2"/><circle cx="212.1" cy="204.7" r="1.2"/><circle cx="312.1" cy="204.7" r="1.2"/><circle cx="412.1" cy="204.7" r="1.2"/><circle cx="512.1" cy="204.7" r="1.2"/><circle cx="612.1" cy="204.7" r="1.2"/><circle cx="712.1" cy="204.7" r="1.2"/><circle cx="12.1" cy="304.7" r="1.2"/><circle cx="112.1" cy="304.7" r="1.2"/><circle cx="212.1" cy="304.7" r="1.2"/><circle cx="312.1" cy="304.7" r="1.2"/><circle cx="412.1" cy="304.7" r="1.2"/><circle cx="512.1" cy="304.7" r="1.2"/><circle cx="612.1" cy="304.7" r="1.2"/><circle cx="712.1" cy="304.7" r="1.2"/><circle cx="12.1" cy="404.7" r="1.2"/><circle cx="112.1" cy="404.7" r="1.2"/><circle cx="212.1" cy="404.7" r="1.2"/><circle cx="312.1" cy="404.7" r="1.2"/><circle cx="412.1" cy="404.7" r="1.2"/><circle cx="512.1" cy="404.7" r="1.2"/><circle cx="612.1" cy="404.7" r="1.2"/><circle cx="712.1" cy="404.7" r="1.2"/></g></svg>

<!-- top strip -->
<div class="a" style="left:0;top:0;width:776px;height:3px;background:#55514b"></div>
<svg class="a" style="left:0;top:0" width="776" height="3"><rect x="2.60" y="0" width="1" height="3" fill="#ffffff" opacity="0.045"/><rect x="21.25" y="0" width="1" height="3" fill="#ffffff" opacity="0.045"/><rect x="39.90" y="0" width="1" height="3" fill="#ffffff" opacity="0.045"/><rect x="58.55" y="0" width="1" height="3" fill="#ffffff" opacity="0.045"/><rect x="77.20" y="0" width="1" height="3" fill="#ffffff" opacity="0.045"/><rect x="95.85" y="0" width="1" height="3" fill="#ffffff" opacity="0.045"/><rect x="114.50" y="0" width="1" height="3" fill="#ffffff" opacity="0.045"/><rect x="133.15" y="0" width="1" height="3" fill="#ffffff" opacity="0.045"/><rect x="151.80" y="0" width="1" height="3" fill="#ffffff" opacity="0.045"/><rect x="170.45" y="0" width="1" height="3" fill="#ffffff" opacity="0.045"/><rect x="189.10" y="0" width="1" height="3" fill="#ffffff" opacity="0.045"/><rect x="207.75" y="0" width="1" height="3" fill="#ffffff" opacity="0.045"/><rect x="226.40" y="0" width="1" height="3" fill="#ffffff" opacity="0.045"/><rect x="245.05" y="0" width="1" height="3" fill="#ffffff" opacity="0.045"/><rect x="263.70" y="0" width="1" height="3" fill="#ffffff" opacity="0.045"/><rect x="282.35" y="0" width="1" height="3" fill="#ffffff" opacity="0.045"/><rect x="301.00" y="0" width="1" height="3" fill="#ffffff" opacity="0.045"/><rect x="319.65" y="0" width="1" height="3" fill="#ffffff" opacity="0.045"/><rect x="338.30" y="0" width="1" height="3" fill="#ffffff" opacity="0.045"/><rect x="356.95" y="0" width="1" height="3" fill="#ffffff" opacity="0.045"/><rect x="375.60" y="0" width="1" height="3" fill="#ffffff" opacity="0.045"/><rect x="394.25" y="0" width="1" height="3" fill="#ffffff" opacity="0.045"/><rect x="412.90" y="0" width="1" height="3" fill="#ffffff" opacity="0.045"/><rect x="431.55" y="0" width="1" height="3" fill="#ffffff" opacity="0.045"/><rect x="450.20" y="0" width="1" height="3" fill="#ffffff" opacity="0.045"/><rect x="468.85" y="0" width="1" height="3" fill="#ffffff" opacity="0.045"/><rect x="487.50" y="0" width="1" height="3" fill="#ffffff" opacity="0.045"/><rect x="506.15" y="0" width="1" height="3" fill="#ffffff" opacity="0.045"/><rect x="524.80" y="0" width="1" height="3" fill="#ffffff" opacity="0.045"/><rect x="543.45" y="0" width="1" height="3" fill="#ffffff" opacity="0.045"/><rect x="562.10" y="0" width="1" height="3" fill="#ffffff" opacity="0.045"/><rect x="580.75" y="0" width="1" height="3" fill="#ffffff" opacity="0.045"/><rect x="599.40" y="0" width="1" height="3" fill="#ffffff" opacity="0.045"/><rect x="618.05" y="0" width="1" height="3" fill="#ffffff" opacity="0.045"/><rect x="636.70" y="0" width="1" height="3" fill="#ffffff" opacity="0.045"/><rect x="655.35" y="0" width="1" height="3" fill="#ffffff" opacity="0.045"/><rect x="674.00" y="0" width="1" height="3" fill="#ffffff" opacity="0.045"/><rect x="692.65" y="0" width="1" height="3" fill="#ffffff" opacity="0.045"/><rect x="711.30" y="0" width="1" height="3" fill="#ffffff" opacity="0.045"/><rect x="729.95" y="0" width="1" height="3" fill="#ffffff" opacity="0.045"/><rect x="748.60" y="0" width="1" height="3" fill="#ffffff" opacity="0.045"/><rect x="767.25" y="0" width="1" height="3" fill="#ffffff" opacity="0.045"/></svg><div class="a" style="left:0;top:2px;width:776px;height:1px;background:rgba(255,255,255,0.04)"></div>
<div class="a" style="left:326px;top:0;width:2px;height:3px;background:#64962e"></div>
<div class="a" style="left:0;top:3px;width:776px;height:3px;background:#161616"></div>
<div class="a" style="left:0;top:6px;width:776px;height:1px;background:#393939"></div>

<!-- header widgets -->
<div class="a" style="left:13px;top:13px;width:12px;height:12px;background:#4772b3;border-radius:1.8px"></div>
<svg class="a" style="left:13px;top:13px" width="12" height="12" viewBox="0 0 12 12"><path d="M2.3 6.1 L5.3 9.2 L10.2 2.6" fill="none" stroke="#fff" stroke-width="1.9" stroke-linecap="butt" stroke-linejoin="miter"/></svg>

<div class="dd" style="left:157px;top:9px;width:79.6px;height:19.6px;background:#222;border-color:#373737"></div>
<svg class="a" style="left:226px;top:17px" width="9" height="6" viewBox="0 0 9 6"><path d="M1 1.2 L4.4 4.6 L7.8 1.2" fill="none" stroke="#dcdcdc" stroke-width="1.2"/></svg>

<div class="dd" style="left:242px;top:9px;width:242.8px;height:19.6px;background:#222;border-color:#373737"></div>
<svg class="a" style="left:246px;top:11px" width="16" height="16" viewBox="0 0 16 16"><circle cx="7.9" cy="8" r="6.5" fill="#1e1e1e" stroke="#e8e8e8" stroke-width="1.3"/><path d="M7.9 1.5 A6.5 6.5 0 0 1 14.3 7.2 Q11 7.4 8.2 9.6 Z" fill="#e8e8e8"/><path d="M1.5 7.6 Q5 8 8.2 9.6 L8 14.5 A6.5 6.5 0 0 1 1.5 7.6 Z" fill="#e8e8e8"/></svg>
<svg class="a" style="left:262.8px;top:17px" width="9" height="6" viewBox="0 0 9 6"><path d="M1 1.2 L4.4 4.6 L7.8 1.2" fill="none" stroke="#dcdcdc" stroke-width="1.2"/></svg>
<div class="a" style="left:273px;top:10px;width:151.5px;height:17.6px;background:#1a1a1a;border-left:1px solid #373737"></div>
<div class="a" style="left:424.3px;top:9px;width:60.5px;height:19.6px;background:#4a4a4a;border-radius:0 4px 4px 0"></div>
<div class="a" style="left:444px;top:9px;width:1px;height:19.6px;background:#3c3c3c"></div>
<div class="a" style="left:464.2px;top:9px;width:1px;height:19.6px;background:#3c3c3c"></div>
<svg class="a" style="left:427.5px;top:11px" width="16" height="16" viewBox="0 0 16 16"><path d="M7.9 1.2 L13.9 3.5 L13.9 8.2 C13.9 11 11 13 7.9 14.3 C4.8 13 1.9 11 1.9 8.2 L1.9 3.5 Z" fill="none" stroke="#c8c8c8" stroke-width="1"/></svg>
<svg class="a" style="left:447px;top:11px" width="16" height="16" viewBox="0 0 16 16"><path d="M5.65 1.65 L11.3 1.65 L14.35 4.7 L14.35 10.3 L5.65 10.3 Z" fill="none" stroke="#e2e2e2" stroke-width="1.15"/><path d="M11.1 1.3 L11.1 4.9 L14.7 4.9 Z" fill="#d8d8d8"/><path d="M3.6 4.1 L1.9 4.1 L1.9 14.6 L11.6 14.6 L11.6 12.2" fill="none" stroke="#e2e2e2" stroke-width="1.15"/></svg>
<svg class="a" style="left:470.2px;top:14px" width="10" height="10" viewBox="0 0 10 10"><path d="M1 1 L9 9 M9 1 L1 9" stroke="#e6e6e6" stroke-width="1.25"/></svg>
<svg class="a" style="left:488px;top:8px" width="24" height="22" viewBox="0 0 24 22"><path d="M7.3 9.3 L11.3 8.6 L15.1 4.3 L18.9 7.9 L15.1 11.6 L13.8 15.6 Z" fill="none" stroke="#cdcdcd" stroke-width="1.05" stroke-linejoin="round"/><path d="M5.4 17.7 L10 12.9" stroke="#cdcdcd" stroke-width="1.05" stroke-linecap="round"/></svg>

<!-- label icon -->
<svg class="a" style="left:-10px;top:45.5px" width="14" height="14" viewBox="0 0 14 14"><circle cx="7" cy="7" r="5.8" fill="#1e1e1e" stroke="#e0e0e0" stroke-width="1.2"/><path d="M7 1.2 A5.8 5.8 0 0 1 12.8 6.6 Q10 6.8 7.2 8.6 Z" fill="#e0e0e0"/><path d="M7.2 8.6 L7 12.8 A5.8 5.8 0 0 0 12.8 7.4 Q10 7.6 7.2 8.6 Z" fill="#1e1e1e"/></svg>

<!-- links -->
<svg class="a" style="left:0;top:0" width="776" height="467">
<path d="M252 155 L307 163" fill="none" stroke="#0c0c0c" stroke-width="3.4" opacity="0.5"/>
<path d="M252 155 L307 163" fill="none" stroke="#e8e4ae" stroke-width="1.8"/>
<path d="M546.5 141 C578 141 578 200 609.5 200" fill="none" stroke="#0c0c0c" stroke-width="3.4" opacity="0.45"/>
<path d="M546.5 141 C578 141 578 200 609.5 200" fill="none" stroke="#5ec35e" stroke-width="2"/>
</svg>

<!-- TEXTURE NODE -->
<div class="node" style="left:12px;top:120px;width:240px;height:246.5px">
  <div class="hdr" style="background:#79461d;border-bottom:1px solid #4f2e14"></div>
</div>
<div class="a" style="left:11px;top:119px;width:242.3px;height:248.3px;border:1.4px solid #f0f0f0;border-radius:6px"></div>
<svg class="a" style="left:23px;top:126.9px" width="10" height="7" viewBox="0 0 10 7"><path d="M0.5 0.7 L4.7 4.9 L8.9 0.7" fill="none" stroke="#e8e8e8" stroke-width="1.05"/></svg>
<!-- image selector -->
<div class="a" style="left:22.3px;top:194.2px;width:108px;height:19.6px;background:#282828;border:1px solid #3b3b3b;border-radius:4px 0 0 4px"></div>
<div class="a" style="left:53.3px;top:195.2px;width:77px;height:17.6px;background:#1b1b1b;border-left:1px solid #3b3b3b"></div>
<svg class="a" style="left:27px;top:197px" width="15" height="15" viewBox="0 0 15 15"><path d="M0.55 9.6 L0.55 0.55 L13.55 0.55 L13.55 13.55 L10.2 13.55" fill="none" stroke="#e6e6e6" stroke-width="1.1"/><path d="M0 14.1 L4.4 6.1 L9.2 14.1 Z" fill="#e6e6e6"/><circle cx="9.4" cy="4.4" r="1.6" fill="#e6e6e6"/></svg>
<svg class="a" style="left:43px;top:201.8px" width="9" height="6" viewBox="0 0 9 6"><path d="M1 1.2 L4.4 4.6 L7.8 1.2" fill="none" stroke="#dcdcdc" stroke-width="1.2"/></svg>
<div class="a" style="left:129.2px;top:191.2px;width:36.6px;height:22.5px;background:#555;border:3.8px solid #ff0000"></div>
<div class="a" style="left:165.8px;top:195px;width:75.2px;height:18.5px;background:#4a4a4a;border-radius:0 4px 4px 0"></div>
<div class="a" style="left:181px;top:195px;width:1px;height:18.5px;background:#3c3c3c"></div>
<div class="a" style="left:201.3px;top:195px;width:1px;height:18.5px;background:#3c3c3c"></div>
<div class="a" style="left:221.4px;top:195px;width:1px;height:18.5px;background:#3c3c3c"></div>
<svg class="a" style="left:164.3px;top:195.8px" width="16" height="16" viewBox="0 0 16 16"><path d="M7.9 1.2 L13.9 3.5 L13.9 8.2 C13.9 11 11 13 7.9 14.3 C4.8 13 1.9 11 1.9 8.2 L1.9 3.5 Z" fill="none" stroke="#9c9c9c" stroke-width="1"/></svg>
<svg class="a" style="left:184px;top:195.6px" width="16" height="16" viewBox="0 0 16 16"><path d="M5.65 1.65 L11.3 1.65 L14.35 4.7 L14.35 10.3 L5.65 10.3 Z" fill="none" stroke="#e2e2e2" stroke-width="1.15"/><path d="M11.1 1.3 L11.1 4.9 L14.7 4.9 Z" fill="#d8d8d8"/><path d="M3.6 4.1 L1.9 4.1 L1.9 14.6 L11.6 14.6 L11.6 12.2" fill="none" stroke="#e2e2e2" stroke-width="1.15"/></svg>
<svg class="a" style="left:204px;top:196.3px" width="16" height="14" viewBox="0 0 16 14"><rect x="0.9" y="0.7" width="5.1" height="2.2" fill="#e6e6e6"/><rect x="0.9" y="2.5" width="14.3" height="2.1" fill="#e6e6e6"/><rect x="0.9" y="5.7" width="14.3" height="7.9" fill="#e6e6e6"/></svg>
<svg class="a" style="left:227px;top:199px" width="10" height="10" viewBox="0 0 10 10"><path d="M1.1 1.1 L8.9 8.9 M8.9 1.1 L1.1 8.9" stroke="#e6e6e6" stroke-width="1.15"/></svg>
<!-- dropdowns -->
<div class="dd" style="left:22px;top:219px;width:219.8px;height:19.7px"></div>
<div class="dd" style="left:22px;top:244px;width:219.8px;height:19.7px"></div>
<div class="dd" style="left:22px;top:269px;width:219.8px;height:19.7px"></div>
<div class="dd" style="left:22px;top:294px;width:219.8px;height:19.7px"></div>
<div class="dd" style="left:99.5px;top:319.3px;width:142.3px;height:19.4px"></div>
<svg class="a" style="left:0;top:0" width="776" height="467"><g fill="none" stroke="#dcdcdc" stroke-width="1.2">
<path d="M232.1 227.9 L235.5 231.4 L238.9 227.9"/>
<path d="M232.1 252.9 L235.5 256.4 L238.9 252.9"/>
<path d="M232.1 277.9 L235.5 281.4 L238.9 277.9"/>
<path d="M232.1 302.9 L235.5 306.4 L238.9 302.9"/>
<path d="M232.1 327.9 L235.5 331.4 L238.9 327.9"/>
</g></svg>

<!-- PRINCIPLED BSDF -->
<div class="node" style="left:307px;top:107px;width:240px;height:339.5px">
  <div class="hdr" style="background:#2c672d;border-bottom:1px solid #1e3d1f"></div>
</div>
<svg class="a" style="left:317.6px;top:113.4px" width="10" height="7" viewBox="0 0 10 7"><path d="M0.5 0.7 L4.7 4.9 L8.9 0.7" fill="none" stroke="#e8e8e8" stroke-width="1.05"/></svg>
<div class="sl" style="left:318px;top:176px;width:218.2px"></div>
<div class="sl" style="left:318px;top:198px;width:218.2px"><div class="a" style="left:0;top:0;width:107.8px;height:18px;background:#4772b3"></div></div>
<div class="sl" style="left:318px;top:220px;width:218.2px"></div>
<div class="sl" style="left:318px;top:242px;width:218.2px;background:#4772b3"></div>
<svg class="a" style="left:0;top:0" width="776" height="467">
<g fill="none" stroke="#dadada" stroke-width="1.1">
<path d="M320.2 289.0 L324.6 293.4 L320.2 297.8"/>
<path d="M320.2 309.0 L324.6 313.4 L320.2 317.8"/>
<path d="M320.2 329.0 L324.6 333.4 L320.2 337.8"/>
<path d="M320.2 349.0 L324.6 353.4 L320.2 357.8"/>
<path d="M320.2 369.0 L324.6 373.4 L320.2 377.8"/>
<path d="M320.2 389.0 L324.6 393.4 L320.2 397.8"/>
<path d="M320.2 409.0 L324.6 413.4 L320.2 417.8"/>
<path d="M320.2 429.0 L324.6 433.4 L320.2 437.8"/>
</g>
</svg>

<!-- MATERIAL OUTPUT -->
<div class="node" style="left:609px;top:141px;width:140.6px;height:139.5px">
  <div class="hdr" style="background:#3f1f27;border-bottom:1px solid #2a171b"></div>
</div>
<svg class="a" style="left:620.7px;top:147.8px" width="10" height="7" viewBox="0 0 10 7"><path d="M0.5 0.7 L4.7 4.9 L8.9 0.7" fill="none" stroke="#e8e8e8" stroke-width="1.05"/></svg>
<div class="dd" style="left:620px;top:168px;width:118.5px;height:19.5px"></div>
<svg class="a" style="left:728.5px;top:176px" width="9" height="6" viewBox="0 0 9 6"><path d="M1 1.2 L4.4 4.6 L7.8 1.2" fill="none" stroke="#dcdcdc" stroke-width="1.2"/></svg>

<!-- SOCKETS -->
<svg class="a" style="left:0;top:0" width="776" height="467"><circle cx="252.15" cy="155.10" r="5.0" fill="#0c0c0c" opacity="0.8"/><circle cx="252.15" cy="155.10" r="4.15" fill="#c7c729"/><circle cx="252.15" cy="177.10" r="5.0" fill="#0c0c0c" opacity="0.8"/><circle cx="252.15" cy="177.10" r="4.15" fill="#a1a1a1"/><circle cx="12.15" cy="351.10" r="5.0" fill="#0c0c0c" opacity="0.8"/><circle cx="12.15" cy="351.10" r="4.15" fill="#6363c7"/><circle cx="546.75" cy="141.10" r="5.0" fill="#0c0c0c" opacity="0.8"/><circle cx="546.75" cy="141.10" r="4.15" fill="#63c763"/><circle cx="307.15" cy="163.10" r="5.0" fill="#0c0c0c" opacity="0.8"/><circle cx="307.15" cy="163.10" r="4.15" fill="#c7c729"/><circle cx="307.15" cy="185.10" r="5.0" fill="#0c0c0c" opacity="0.8"/><circle cx="307.15" cy="185.10" r="4.15" fill="#a1a1a1"/><circle cx="307.15" cy="207.10" r="5.0" fill="#0c0c0c" opacity="0.8"/><circle cx="307.15" cy="207.10" r="4.15" fill="#a1a1a1"/><circle cx="307.15" cy="229.10" r="5.0" fill="#0c0c0c" opacity="0.8"/><circle cx="307.15" cy="229.10" r="4.15" fill="#a1a1a1"/><circle cx="307.15" cy="251.10" r="5.0" fill="#0c0c0c" opacity="0.8"/><circle cx="307.15" cy="251.10" r="4.15" fill="#a1a1a1"/><circle cx="307.15" cy="273.10" r="5.0" fill="#0c0c0c" opacity="0.8"/><circle cx="307.15" cy="273.10" r="4.15" fill="#6363c7"/><circle cx="609.65" cy="200.10" r="5.0" fill="#0c0c0c" opacity="0.8"/><circle cx="609.65" cy="200.10" r="4.15" fill="#63c763"/><circle cx="609.65" cy="222.10" r="5.0" fill="#0c0c0c" opacity="0.8"/><circle cx="609.65" cy="222.10" r="4.15" fill="#63c763"/><circle cx="609.65" cy="244.10" r="5.0" fill="#0c0c0c" opacity="0.8"/><circle cx="609.65" cy="244.10" r="4.15" fill="#6363c7"/><circle cx="609.65" cy="266.10" r="5.0" fill="#0c0c0c" opacity="0.8"/><circle cx="609.65" cy="266.10" r="4.15" fill="#a1a1a1"/></svg>
<!-- TEXTS -->
<div class="a" style="left:0;top:0;width:776px;height:467px;will-change:transform">
<div class="t" style="left:28.71px;top:12.08px;transform:scaleX(1.0172)">Use Nodes</div>
<div class="t" style="left:164.55px;top:12.08px;transform:scaleX(1.0860)">Slot 3</div>
<div class="t" style="left:280.52px;top:12.08px;transform:scaleX(1.0291)">Terrain_carre_modele.001</div>
<div class="t" style="left:11.74px;top:46.08px;transform:scaleX(1.0352)">Terrain_carre_modele.001</div>
<div class="t" style="left:37.56px;top:123.08px;transform:scaleX(1.0514)">Texture_terrain</div>
<div class="t r" style="right:534.60px;top:148.08px;transform:scaleX(1.0969);transform-origin:right center">Color</div>
<div class="t r" style="right:534.68px;top:170.08px;transform:scaleX(1.0687);transform-origin:right center">Alpha</div>
<div class="t" style="left:60.73px;top:197.08px;transform:scaleX(1.0499)">Texture_te...</div>
<div class="t" style="left:139.62px;top:197.08px;transform:scaleX(1.1040)">37</div>
<div class="t" style="left:29.67px;top:222.08px;transform:scaleX(0.9839)">Linear</div>
<div class="t" style="left:29.74px;top:247.08px;transform:scaleX(0.9913)">Flat</div>
<div class="t" style="left:29.68px;top:272.08px;transform:scaleX(0.9833)">Repeat</div>
<div class="t" style="left:29.74px;top:297.08px;transform:scaleX(0.9984)">Generated</div>
<div class="t" style="left:22.73px;top:322.08px;transform:scaleX(1.0480)">Color Space</div>
<div class="t" style="left:106.72px;top:322.08px;transform:scaleX(0.9583)">sRGB</div>
<div class="t" style="left:22.82px;top:344.08px;transform:scaleX(1.0889)">Vector</div>
<div class="t" style="left:331.52px;top:110.08px;transform:scaleX(1.0073)">Principled BSDF</div>
<div class="t r" style="right:239.38px;top:134.08px;transform:scaleX(0.9618);transform-origin:right center">BSDF</div>
<div class="t" style="left:317.54px;top:156.08px;transform:scaleX(1.0278)">Base Color</div>
<div class="t" style="left:332.60px;top:178.08px;transform:scaleX(1.0872)">Metallic</div>
<div class="t" style="left:331.64px;top:200.08px;transform:scaleX(1.0423)">Roughness</div>
<div class="t" style="left:331.57px;top:222.08px;transform:scaleX(1.0746)">IOR</div>
<div class="t" style="left:332.77px;top:244.08px;transform:scaleX(1.0759)">Alpha</div>
<div class="t r" style="right:252.54px;top:178.08px;transform:scaleX(1.1118);transform-origin:right center">0.000</div>
<div class="t r" style="right:252.54px;top:200.08px;transform:scaleX(1.1118);transform-origin:right center">0.500</div>
<div class="t r" style="right:252.49px;top:222.08px;transform:scaleX(1.1041);transform-origin:right center">1.500</div>
<div class="t r" style="right:252.49px;top:244.08px;transform:scaleX(1.1041);transform-origin:right center">1.000</div>
<div class="t" style="left:317.69px;top:266.08px;transform:scaleX(1.0645)">Normal</div>
<div class="t" style="left:331.40px;top:287.08px;transform:scaleX(1.1124)">Diffuse</div>
<div class="t" style="left:331.59px;top:307.08px;transform:scaleX(1.0599)">Subsurface</div>
<div class="t" style="left:331.81px;top:327.08px;transform:scaleX(1.0284)">Specular</div>
<div class="t" style="left:331.76px;top:347.08px;transform:scaleX(1.0650)">Transmission</div>
<div class="t" style="left:331.80px;top:367.08px;transform:scaleX(1.0408)">Coat</div>
<div class="t" style="left:331.72px;top:387.08px;transform:scaleX(1.0146)">Sheen</div>
<div class="t" style="left:331.73px;top:407.08px;transform:scaleX(1.0750)">Emission</div>
<div class="t" style="left:331.81px;top:427.08px;transform:scaleX(1.0356)">Thin Film</div>
<div class="t" style="left:633.68px;top:144.08px;transform:scaleX(1.0622)">Material Output</div>
<div class="t" style="left:627.59px;top:171.08px;transform:scaleX(1.1783)">All</div>
<div class="t" style="left:620.70px;top:193.08px;transform:scaleX(1.0475)">Surface</div>
<div class="t" style="left:620.72px;top:215.08px;transform:scaleX(1.0900)">Volume</div>
<div class="t" style="left:620.64px;top:237.08px;transform:scaleX(1.0313)">Displacement</div>
<div class="t" style="left:619.50px;top:259.08px;transform:scaleX(1.0518)">Thickness</div>
</div>
</body></html>
